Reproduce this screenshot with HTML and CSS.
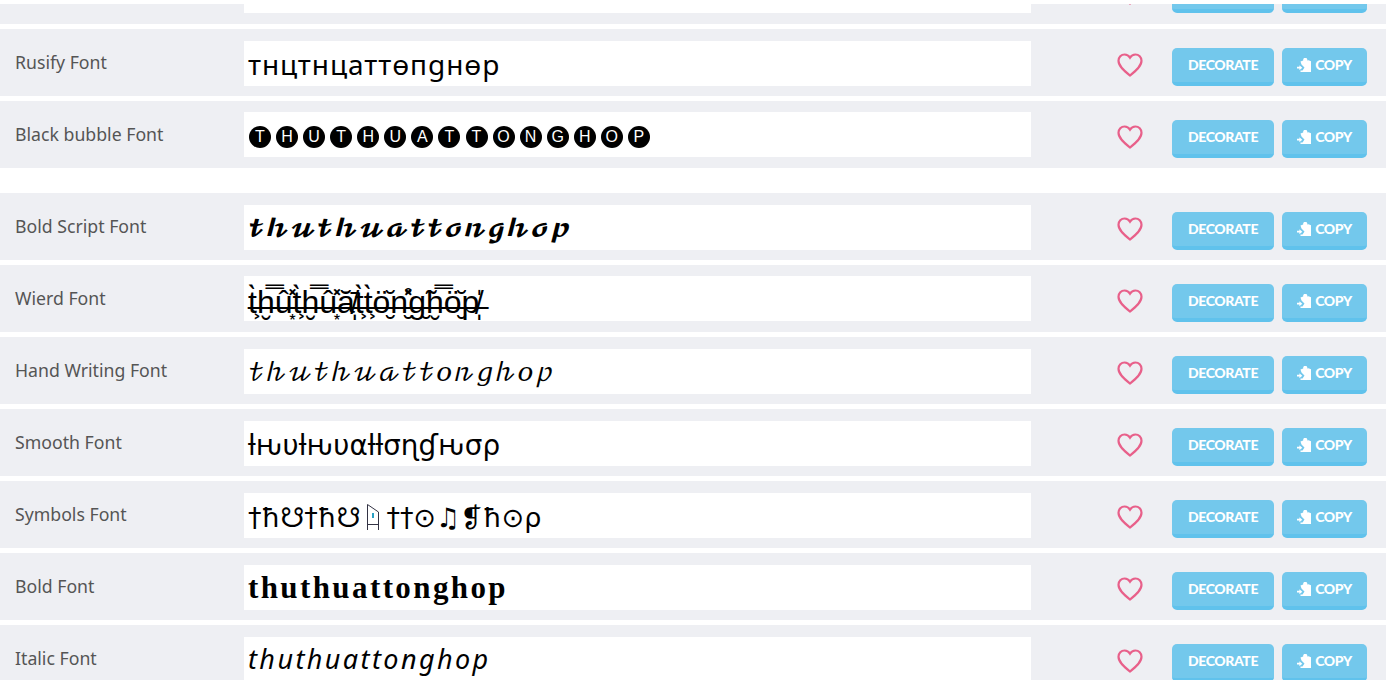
FILE: index.html
```html
<!DOCTYPE html>
<html lang="en">
<head>
    <meta charset="UTF-8">
    <title>Font list</title>
    <link rel="stylesheet" href="styles.css">
</head>
<body>
    <svg width="0" height="0" class="defs">
        <symbol id="heart" viewBox="0 0 26 24">
            <path d="M13 22.500C8 18.500 1.500 13.500 1.500 7.800 1.500 4.200 4.200 1.500 7.600 1.500c2.200 0 4.200 1.200 5.400 3.200 1.200-2 3.200-3.200 5.400-3.200 3.400 0 6.100 2.700 6.100 6.300 0 5.700-6.500 10.700-11.500 14.700z" fill="none" stroke="currentColor" stroke-width="2.200"/>
        </symbol>
        <symbol id="clip" viewBox="0 0 14 14">
            <path d="M3.500 3.600 6.200 2.500V1.500C6.200.6 6.900 0 7.700 0h1.100c.8 0 1.500.6 1.500 1.500v1l1.200-.3 2.500 1V14H3.500v-1.500H5.500L7.500 9.500 4.500 6.500z" fill="currentColor"/>
            <path d="M0 8.800h2.400V7.200L5.300 9.800l-2.900 2.500v-1.700H0z" fill="currentColor"/>
        </symbol>
    </svg>

    <div class="group">
        <div class="row row-cut">
            <div class="name"></div>
            <div class="sample"></div>
            <svg class="heart"><use href="#heart"/></svg>
            <div class="actions">
                <div class="btn btn-decorate"></div>
                <div class="btn btn-copy"></div>
            </div>
        </div>
        <div class="row">
            <div class="name">Rusify Font</div>
            <div class="sample f-rusify">тнцтнцаттѳпgнѳp</div>
            <svg class="heart"><use href="#heart"/></svg>
            <div class="actions">
                <button class="btn btn-decorate">DECORATE</button>
                <button class="btn btn-copy"><svg class="clip"><use href="#clip"/></svg>COPY</button>
            </div>
        </div>
        <div class="row">
            <div class="name">Black bubble Font</div>
            <div class="sample f-bubble"><span>T</span><span>H</span><span>U</span><span>T</span><span>H</span><span>U</span><span>A</span><span>T</span><span>T</span><span>O</span><span>N</span><span>G</span><span>H</span><span>O</span><span>P</span></div>
            <svg class="heart"><use href="#heart"/></svg>
            <div class="actions">
                <button class="btn btn-decorate">DECORATE</button>
                <button class="btn btn-copy"><svg class="clip"><use href="#clip"/></svg>COPY</button>
            </div>
        </div>
    </div>

    <div class="group">
        <div class="row">
            <div class="name">Bold Script Font</div>
            <div class="sample f-script-bold">𝓽𝓱𝓾𝓽𝓱𝓾𝓪𝓽𝓽𝓸𝓷𝓰𝓱𝓸𝓹</div>
            <svg class="heart"><use href="#heart"/></svg>
            <div class="actions">
                <button class="btn btn-decorate">DECORATE</button>
                <button class="btn btn-copy"><svg class="clip"><use href="#clip"/></svg>COPY</button>
            </div>
        </div>
        <div class="row">
            <div class="name">Wierd Font</div>
            <div class="sample f-wierd">t&#x336;&#x300;&#x355;h&#x336;&#x33F;&#x32E;u&#x336;&#x302;&#x33D;&#x359;t&#x336;&#x300;&#x355;h&#x336;&#x33F;&#x32E;u&#x336;&#x302;&#x33D;&#x359;a&#x336;&#x306;&#x304;&#x338;&#x329;t&#x336;&#x300;&#x355;t&#x336;&#x300;&#x355;o&#x336;&#x308;&#x306;&#x32E;n&#x336;&#x30A;&#x33D;&#x32E;g&#x336;&#x303;&#x32E;h&#x336;&#x33F;&#x32E;o&#x336;&#x308;&#x306;&#x32E;p&#x336;&#x338;&#x30D;&#x329;</div>
            <svg class="heart"><use href="#heart"/></svg>
            <div class="actions">
                <button class="btn btn-decorate">DECORATE</button>
                <button class="btn btn-copy"><svg class="clip"><use href="#clip"/></svg>COPY</button>
            </div>
        </div>
        <div class="row">
            <div class="name">Hand Writing Font</div>
            <div class="sample f-script">𝓉𝒽𝓊𝓉𝒽𝓊𝒶𝓉𝓉𝑜𝓃𝑔𝒽𝑜𝓅</div>
            <svg class="heart"><use href="#heart"/></svg>
            <div class="actions">
                <button class="btn btn-decorate">DECORATE</button>
                <button class="btn btn-copy"><svg class="clip"><use href="#clip"/></svg>COPY</button>
            </div>
        </div>
        <div class="row">
            <div class="name">Smooth Font</div>
            <div class="sample f-smooth">ƚԋυƚԋυαƚƚσɳɠԋσρ</div>
            <svg class="heart"><use href="#heart"/></svg>
            <div class="actions">
                <button class="btn btn-decorate">DECORATE</button>
                <button class="btn btn-copy"><svg class="clip"><use href="#clip"/></svg>COPY</button>
            </div>
        </div>
        <div class="row">
            <div class="name">Symbols Font</div>
            <div class="sample f-symbols">†ħ☋†ħ☋<svg class="tofu" viewBox="0 0 14 28"><path d="M1.500 1.500V27M12.500 9V27M1.500 1.500 12.500 9M1.500 21.500h11" fill="none" stroke="#334" stroke-width="1"/><path d="M6 10h2v5H6z" fill="#29a0c4"/></svg>††⊙♫❡ħ⊙ρ</div>
            <svg class="heart"><use href="#heart"/></svg>
            <div class="actions">
                <button class="btn btn-decorate">DECORATE</button>
                <button class="btn btn-copy"><svg class="clip"><use href="#clip"/></svg>COPY</button>
            </div>
        </div>
        <div class="row">
            <div class="name">Bold Font</div>
            <div class="sample f-bold">thuthuattonghop</div>
            <svg class="heart"><use href="#heart"/></svg>
            <div class="actions">
                <button class="btn btn-decorate">DECORATE</button>
                <button class="btn btn-copy"><svg class="clip"><use href="#clip"/></svg>COPY</button>
            </div>
        </div>
        <div class="row">
            <div class="name">Italic Font</div>
            <div class="sample f-italic">thuthuattonghop</div>
            <svg class="heart"><use href="#heart"/></svg>
            <div class="actions">
                <button class="btn btn-decorate">DECORATE</button>
                <button class="btn btn-copy"><svg class="clip"><use href="#clip"/></svg>COPY</button>
            </div>
        </div>
    </div>
</body>
</html>
```

FILE: styles.css
```css
html, body {
    height: 680px;
    overflow: hidden;
}

body {
    margin: 0;
    padding-top: 4px;
    background: #fff;
    font-family: "Noto Sans", sans-serif;
}

.defs {
    display: none;
}

.group {
    margin-bottom: 25px;
}

.row {
    display: flex;
    align-items: center;
    height: 67.05px;
    margin-bottom: 5px;
    padding: 0 19px 0 15px;
    background: #eeeff3;
    box-sizing: border-box;
}

/* first row is scrolled out of view, only its bottom shows */
.row-cut {
    height: 20px;
    overflow: hidden;
    align-items: flex-end;
    padding-bottom: 11px;
}

.name {
    width: 229px;
    flex-shrink: 0;
    margin-top: -2px;
    color: #555;
    font-size: 17.7px;
}

.sample {
    width: 787px;
    height: 45px;
    flex-shrink: 0;
    box-sizing: border-box;
    margin-top: 1.2px;
    padding-left: 4px;
    background: #fff;
    color: #000;
    font-size: 28px;
    line-height: 49px;
    white-space: nowrap;
}

.row-cut .sample {
    height: 9px;
    margin-top: 0;
}

.heart {
    width: 26px;
    height: 24px;
    margin: 4px 29px 0 86px;
    flex-shrink: 0;
    color: #e8608a;
}

.row-cut .heart {
    margin-bottom: 8px;
}

.actions {
    display: flex;
    gap: 8px;
    margin-top: 8px;
}

.btn {
    height: 38px;
    padding: 0;
    border: none;
    border-bottom: 4px solid #60c2ec;
    border-radius: 5px;
    background: #73c8ec;
    color: #fff;
    font-family: "Lato", sans-serif;
    font-size: 14px;
    font-weight: 900;
    letter-spacing: -0.4px;
    display: flex;
    align-items: center;
    justify-content: center;
    box-sizing: border-box;
}

.btn-decorate {
    width: 102px;
}

.btn-copy {
    width: 85px;
}

.clip {
    width: 14px;
    height: 14px;
    margin-right: 4px;
}

.f-rusify {
    font-family: "Noto Sans", sans-serif;
    font-size: 28px;
    letter-spacing: 0.95px;
    line-height: 47px;
}

.f-bubble {
    display: flex;
    gap: 5.07px;
    margin-top: 0;
    padding-left: 5px;
    padding-top: 14px;
}

.f-bubble span {
    width: 22px;
    height: 22px;
    border-radius: 50%;
    background: #000;
    color: #fff;
    font-family: "Liberation Sans", sans-serif;
    font-size: 16px;
    line-height: 22px;
    text-align: center;
}

.f-script-bold, .f-script {
    font-family: "DejaVu Math TeX Gyre", "DejaVu Serif", serif;
}

.f-script-bold {
    font-size: 24.5px;
}

.f-script {
    font-size: 26.3px;
}

.f-wierd {
    margin-top: 0;
    font-family: "Liberation Sans", "DejaVu Sans", sans-serif;
    font-size: 32px;
    line-height: 53px;
}

.f-smooth, .f-symbols {
    font-family: "DejaVu Sans", sans-serif;
}

.f-smooth {
    font-size: 27.8px;
}

.f-symbols {
    font-size: 27px;
}

.tofu {
    width: 14px;
    height: 28px;
    margin: 0 6px -4px 6px;
}

.f-bold {
    font-family: "Liberation Serif", serif;
    font-size: 31px;
    font-weight: bold;
    letter-spacing: 2.4px;
    line-height: 45px;
}

.f-italic {
    font-family: "Noto Sans", sans-serif;
    font-style: italic;
    font-size: 27px;
    letter-spacing: 2.4px;
    line-height: 43px;
}
```
